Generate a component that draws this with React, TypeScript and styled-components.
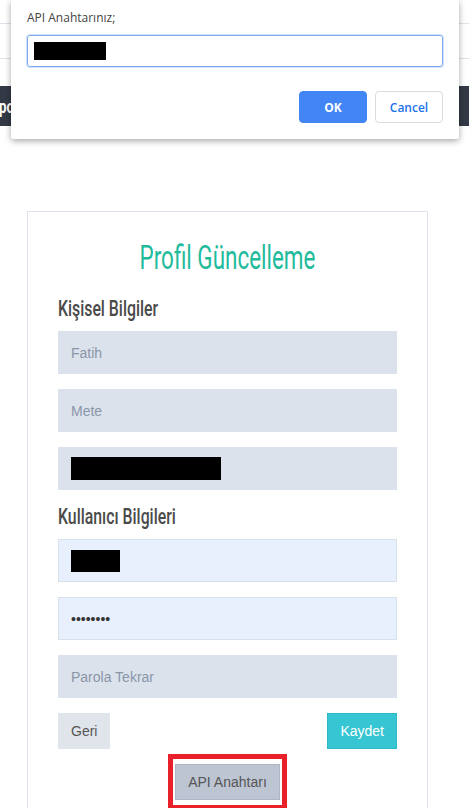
import React from "react";
import styled, { createGlobalStyle } from "styled-components";

const GlobalStyle = createGlobalStyle`
  html, body {
    margin: 0;
    padding: 0;
    background: #ffffff;
    font-family: "Liberation Sans", Arial, sans-serif;
  }
  * {
    box-sizing: border-box;
  }
`;

// no Oswald offline: Roboto squeezed horizontally comes closest
const condensed = `Roboto, "Liberation Sans", sans-serif`;

const Page = styled.div`
  position: relative;
  width: 469px;
  height: 808px;
  overflow: hidden;
  background: #ffffff;
`;

const TopStrip = styled.div`
  height: 86px;
  padding-top: 23px;
`;

const Rule = styled.div<{ $gap: number }>`
  height: 1px;
  background: #dfe3ea;
  margin-bottom: ${(p) => p.$gap}px;
`;

const NavBar = styled.div`
  height: 40px;
  background: #333a45;
  display: flex;
  align-items: center;
`;

const NavBrand = styled.div`
  color: #ffffff;
  font-family: ${condensed};
  font-weight: bold;
  font-size: 19px;
  transform: scaleX(0.7);
  transform-origin: left center;
  margin-left: -1px;
`;

const Main = styled.div`
  padding: 85px 0 0 27px;
`;

const Card = styled.div`
  width: 401px;
  border: 1px solid #dde3ea;
  border-bottom: none;
  padding: 25px 30px 40px 30px;
  min-height: 620px;
`;

const Title = styled.h1`
  margin: 0 0 20px 0;
  text-align: center;
  font-family: ${condensed};
  font-weight: normal;
  font-size: 34px;
  line-height: 40px;
  color: #1fbb9c;
  transform: scaleX(0.66);
  transform-origin: center;
`;

const SectionTitle = styled.h2<{ $top?: number }>`
  margin: ${(p) => p.$top ?? 0}px 0 10px 0;
  font-family: ${condensed};
  font-weight: 500;
  font-size: 22px;
  line-height: 24px;
  color: #4a4a4a;
  transform: scaleX(0.72);
  transform-origin: left center;
`;

const Field = styled.div<{ $filled?: boolean }>`
  height: 43px;
  margin-bottom: 15px;
  background: ${(p) => (p.$filled ? "#e8f0fe" : "#dce2ec")};
  border: 1px solid ${(p) => (p.$filled ? "#d8e0ea" : "#dce2ec")};
  display: flex;
  align-items: center;
  padding: 0 12px;
`;

const Input = styled.input`
  border: none;
  outline: none;
  background: transparent;
  width: 100%;
  font-family: "Liberation Sans", Arial, sans-serif;
  font-size: 14px;
  color: #333;
  padding: 0;

  &::placeholder {
    color: #8a96a8;
  }
`;

const Redacted = styled.div<{ $w: number; $h: number }>`
  width: ${(p) => p.$w}px;
  height: ${(p) => p.$h}px;
  background: #000000;
`;

const ButtonRow = styled.div`
  display: flex;
  justify-content: space-between;
`;

const Button = styled.button<{ $variant: "plain" | "primary" | "muted" }>`
  height: 36px;
  padding: 0 12px;
  font-family: "Liberation Sans", Arial, sans-serif;
  font-size: 14px;
  border: 1px solid
    ${(p) =>
      p.$variant === "primary" ? "#2cb9c6" : p.$variant === "muted" ? "#adb6c6" : "#e0e4eb"};
  background: ${(p) =>
    p.$variant === "primary" ? "#36c6d3" : p.$variant === "muted" ? "#bdc5d3" : "#e0e4eb"};
  color: ${(p) => (p.$variant === "primary" ? "#ffffff" : "#555555")};
`;

const Center = styled.div`
  display: flex;
  justify-content: center;
  margin-top: 5px;
`;

const Highlight = styled.div`
  border: 5px solid #e8202a;
  padding: 5px 2px;
`;

const Dialog = styled.div`
  position: absolute;
  top: 0;
  left: 11px;
  width: 448px;
  height: 139px;
  background: #ffffff;
  border-radius: 0 0 2px 2px;
  box-shadow: 0 2px 6px rgba(0, 0, 0, 0.35);
  padding: 9px 16px 0 16px;
  font-family: "Open Sans", "Noto Sans", sans-serif;
`;

const DialogLabel = styled.div`
  font-size: 12px;
  color: #444;
  height: 26px;
`;

const DialogInput = styled.div`
  height: 32px;
  border: 1px solid #7faaf0;
  border-radius: 3px;
  box-shadow: 0 0 0 1px rgba(127, 170, 240, 0.35);
  display: flex;
  align-items: center;
  padding-left: 6px;
`;

const DialogActions = styled.div`
  display: flex;
  justify-content: flex-end;
  gap: 8px;
  margin-top: 24px;
`;

const DialogButton = styled.button<{ $primary?: boolean }>`
  width: 68px;
  height: 32px;
  border-radius: 4px;
  font-family: "Open Sans", "Noto Sans", sans-serif;
  font-size: 12px;
  font-weight: ${(p) => (p.$primary ? 700 : 600)};
  border: 1px solid ${(p) => (p.$primary ? "#4285f4" : "#dadce0")};
  background: ${(p) => (p.$primary ? "#4285f4" : "#ffffff")};
  color: ${(p) => (p.$primary ? "#ffffff" : "#1a73e8")};
`;

export default function App() {
  return (
    <Page>
      <GlobalStyle />
      <TopStrip>
        <Rule $gap={34} />
        <Rule $gap={0} />
      </TopStrip>
      <NavBar>
        <NavBrand>portal</NavBrand>
      </NavBar>
      <Main>
        <Card>
          <Title>Profil Güncelleme</Title>
          <SectionTitle>Kişisel Bilgiler</SectionTitle>
          <Field>
            <Input placeholder="Fatih" />
          </Field>
          <Field>
            <Input placeholder="Mete" />
          </Field>
          <Field>
            <Redacted $w={150} $h={23} />
          </Field>
          <SectionTitle $top={3}>Kullanıcı Bilgileri</SectionTitle>
          <Field $filled>
            <Redacted $w={49} $h={22} />
          </Field>
          <Field $filled>
            <Input type="password" defaultValue="12345678" />
          </Field>
          <Field>
            <Input type="password" placeholder="Parola Tekrar" />
          </Field>
          <ButtonRow>
            <Button $variant="plain">Geri</Button>
            <Button $variant="primary">Kaydet</Button>
          </ButtonRow>
          <Center>
            <Highlight>
              <Button $variant="muted">API Anahtarı</Button>
            </Highlight>
          </Center>
        </Card>
      </Main>
      <Dialog>
        <DialogLabel>API Anahtarınız;</DialogLabel>
        <DialogInput>
          <Redacted $w={72} $h={18} />
        </DialogInput>
        <DialogActions>
          <DialogButton $primary>OK</DialogButton>
          <DialogButton>Cancel</DialogButton>
        </DialogActions>
      </Dialog>
    </Page>
  );
}
